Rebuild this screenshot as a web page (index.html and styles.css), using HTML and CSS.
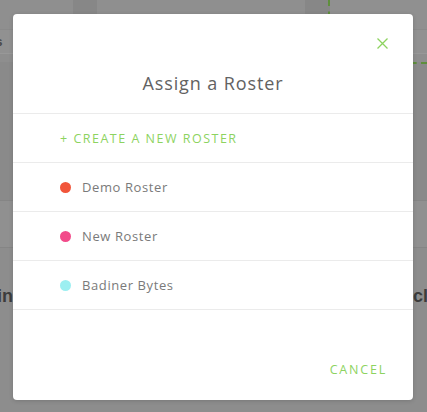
FILE: index.html
```html
<!DOCTYPE html>
<html lang="en">
<head>
<meta charset="utf-8">
<title>Assign a Roster</title>
<link rel="stylesheet" href="styles.css">
</head>
<body>
<div class="page">
  <div class="bg-top">
    <div class="bg-col c1"></div>
    <div class="bg-col c2"></div>
    <div class="bg-col c3"></div>
    <div class="bg-col c4"></div>
    <div class="bg-col c5"></div>
  </div>
  <div class="bg-tabs"><span class="tab-label">Rosters</span></div>
  <div class="bg-band"></div>
  <div class="bg-area">
    <div class="bg-dash"></div>
  </div>
  <div class="bg-row"></div>
  <div class="bg-bottom">
    <div class="bg-cell left"><span>Teams in</span></div>
    <div class="bg-cell mid"></div>
    <div class="bg-cell right"><span>clubs</span></div>
  </div>

  <div class="overlay">
    <div class="modal" role="dialog" aria-label="Assign a Roster">
      <div class="modal-head">
        <button class="close" aria-label="Close">
          <svg width="11" height="11" viewBox="0 0 11 11"><path d="M0.5 0.5 L10.5 10.5 M10.5 0.5 L0.5 10.5" stroke="#8dd35f" stroke-width="1.3" fill="none"/></svg>
        </button>
        <h2 class="title">Assign a Roster</h2>
      </div>
      <ul class="list">
        <li class="item create">+ CREATE A NEW ROSTER</li>
        <li class="item"><span class="dot red"></span>Demo Roster</li>
        <li class="item"><span class="dot pink"></span>New Roster</li>
        <li class="item"><span class="dot cyan"></span>Badiner Bytes</li>
      </ul>
      <div class="modal-foot">
        <button class="cancel">CANCEL</button>
      </div>
    </div>
  </div>
</div>
</body>
</html>
```
FILE: styles.css
```css
* { box-sizing: border-box; }
html, body { margin: 0; padding: 0; }
body {
  width: 427px;
  height: 412px;
  overflow: hidden;
  background: #8d8d8d;
  font-family: "Open Sans", "Liberation Sans", sans-serif;
}
.page {
  position: relative;
  width: 427px;
  height: 412px;
  display: flex;
  flex-direction: column;
}
.bg-top {
  height: 29px;
  display: flex;
  flex: none;
}
.bg-col { height: 100%; }
.c1 { width: 73px; background: #8f8f8f; }
.c2 { width: 24px; background: #878787; }
.c3 { width: 208px; background: #8f8f8f; }
.c4 { width: 25px; background: #878787; border-right: 2px dashed #5f8f3c; }
.c5 { flex: 1; background: #909090; }
.bg-tabs {
  height: 25px;
  flex: none;
  background: #919191;
  border-top: 1px solid #8a8a8a;
  border-bottom: 1px solid #989898;
  display: flex;
  align-items: center;
  overflow: hidden;
}
.tab-label {
  margin-left: -46px;
  font-family: "Liberation Sans", sans-serif;
  font-weight: bold;
  font-size: 13px;
  color: #4a4a4a;
}
.bg-band { height: 8px; flex: none; background: #8e8e8e; }
.bg-area {
  height: 138px;
  flex: none;
  background: #8a8a8a;
  display: flex;
  flex-direction: column;
}
.bg-dash {
  margin-left: 390px;
  height: 0;
  border-top: 2px dashed #5f8f3c;
}
.bg-row {
  height: 48px;
  flex: none;
  background: #909090;
  border-top: 1px solid #858585;
  border-bottom: 1px solid #858585;
}
.bg-bottom {
  flex: 1;
  background: #8d8d8d;
  display: grid;
  grid-template-columns: 13px 400px 1fr;
  align-items: start;
  padding-top: 38px;
  overflow: hidden;
  font-family: "Liberation Sans", sans-serif;
  font-weight: bold;
  font-size: 18px;
  color: #3c3c3c;
}
.bg-cell {
  display: flex;
  overflow: hidden;
  white-space: nowrap;
}
.bg-cell.left { justify-content: flex-end; }
.bg-cell.right { justify-content: flex-start; }

.overlay {
  position: absolute;
  inset: 0;
}
.modal {
  position: absolute;
  left: 13px;
  top: 14px;
  width: 400px;
  height: 386px;
  background: #fff;
  border-radius: 4px;
  box-shadow: 0 1px 4px rgba(0,0,0,0.15);
  display: flex;
  flex-direction: column;
}
.modal-head {
  height: 100px;
  flex: none;
  border-bottom: 1px solid #ebebeb;
  display: flex;
  flex-direction: column;
  align-items: center;
}
.close {
  align-self: flex-end;
  margin: 24px 25px 0 0;
  padding: 0;
  border: 0;
  background: none;
  width: 11px;
  height: 11px;
  display: flex;
}
.title {
  margin: 22px 0 0;
  font-size: 18px;
  font-weight: 400;
  color: #626262;
  letter-spacing: 0.9px;
  line-height: 24px;
}
.list {
  list-style: none;
  margin: 0;
  padding: 0;
}
.item {
  height: 49px;
  border-bottom: 1px solid #ebebeb;
  display: flex;
  align-items: center;
  padding-left: 47px;
  font-size: 13px;
  color: #7a7a7a;
  letter-spacing: 0.6px;
}
.item.create {
  color: #8dd35f;
  letter-spacing: 1.5px;
  font-size: 12.5px;
}
.dot {
  width: 11px;
  height: 11px;
  border-radius: 50%;
  margin-right: 11px;
  flex: none;
}
.red { background: #f1553a; }
.pink { background: #f24b8a; }
.cyan { background: #9ceff1; }
.modal-foot {
  flex: 1;
  display: flex;
  justify-content: flex-end;
  align-items: flex-end;
  padding: 0 26px 22px 0;
}
.cancel {
  border: 0;
  background: none;
  padding: 0;
  font-family: "Open Sans", "Liberation Sans", sans-serif;
  font-size: 12.5px;
  letter-spacing: 1.8px;
  color: #8dd35f;
  line-height: 16px;
}
```
